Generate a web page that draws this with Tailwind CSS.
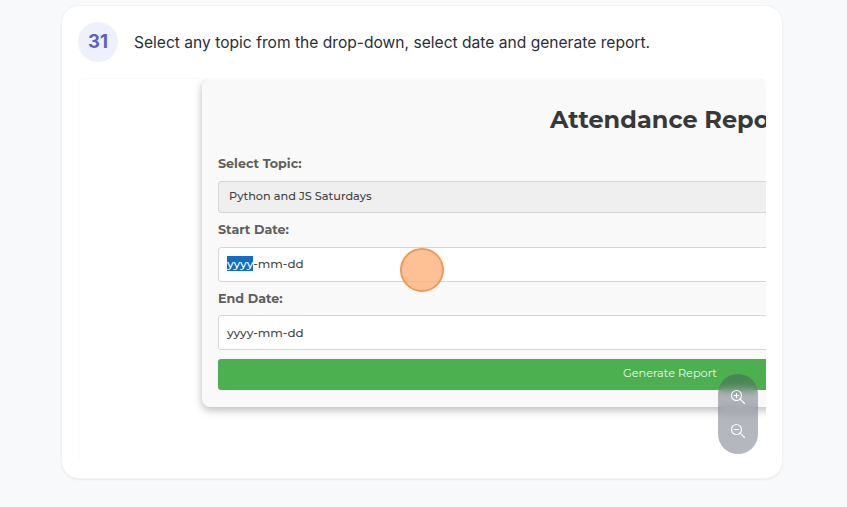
<!DOCTYPE html>
<html><head><meta charset="utf-8">
<script src="https://cdn.jsdelivr.net/npm/@tailwindcss/browser@4"></script>
</head>
<body class="m-0 bg-[#f8f9fb]">
<div class="w-[847px] h-[507px] overflow-hidden pt-[5px] pl-[61px] font-['Inter',sans-serif]">
  <div class="w-[722px] h-[474px] bg-white rounded-[18px] border border-[#f1f2f4] shadow-[0_1px_2px_rgba(0,0,0,0.06)] pt-4 px-4">
    <div class="flex items-center gap-4 h-10">
      <div class="w-10 h-10 shrink-0 rounded-full bg-[#eef0fc] text-[#5b5fc7] flex items-center justify-center text-[18.5px] font-bold">31</div>
      <p class="pt-[2px] text-[15.6px] text-[#2b2f38] whitespace-nowrap">Select any topic from the drop-down, select date and generate report.</p>
    </div>
    <div class="relative mt-4 w-[688px] h-[384px] overflow-hidden rounded-md border-l border-t border-[#fafafa] bg-white pl-[123px]">
      <div class="w-[640px] h-[328px] bg-[#f9f9f9] rounded-lg shadow-[0_3px_8px_rgba(0,0,0,0.28)] pt-6 pl-4 font-['Montserrat','Noto_Sans',sans-serif] text-[#5f5f5f]">
        <h1 class="h-[34px] leading-[34px] pl-[332px] text-[24px] font-bold text-[#383838] whitespace-nowrap">Attendance Report</h1>
        <div class="mt-[18px] h-[18px] leading-[18px] text-[12.7px] font-bold">Select Topic:</div>
        <div class="mt-[8px] w-[620px] h-[32px] bg-[#efefef] border border-[#d6d6d6] rounded-[3px] pl-[10px] leading-[29px] text-[11.3px] font-medium text-[#444]">Python and JS Saturdays</div>
        <div class="mt-[8px] h-[18px] leading-[18px] text-[12.7px] font-bold">Start Date:</div>
        <div class="mt-[8px] w-[620px] h-[35px] bg-white border border-[#d6d6d6] rounded-[3px] pl-[8px] leading-[31px] text-[11.9px] font-medium text-[#4a4a4a]"><span class="bg-[#0f6fc6] text-white">yyyy</span>-mm-dd</div>
        <div class="mt-[8px] h-[18px] leading-[18px] text-[12.7px] font-bold">End Date:</div>
        <div class="mt-[7px] w-[620px] h-[35px] bg-white border border-[#d6d6d6] rounded-[3px] pl-[8px] leading-[33px] text-[11.9px] font-medium text-[#4a4a4a]">yyyy-mm-dd</div>
        <div class="mt-[9px] w-[620px] h-[31px] bg-[#4caf50] rounded-[3px] pl-[405px] leading-[29px] text-[11.3px] text-[#eefbee] whitespace-nowrap">Generate Report</div>
      </div>
      <div class="absolute left-[321px] top-[169px] w-[44px] h-[44px] rounded-full bg-[#fdb27a]/80 border-2 border-[#ef9a55]"></div>
      <div class="absolute left-[639px] top-[295px] w-10 h-20 rounded-[20px] bg-[#464b5f]/40 backdrop-blur-[4px] flex flex-col items-center justify-center gap-[18px]">
        <svg class="w-4 h-4" viewBox="0 0 16 16" fill="none" stroke="#fff" stroke-width="1.1" stroke-linecap="round"><circle cx="6.5" cy="6.5" r="5"/><path d="M10.2 10.2 14.5 14.5M4.3 6.5h4.4M6.5 4.3v4.4"/></svg>
        <svg class="w-4 h-4" viewBox="0 0 16 16" fill="none" stroke="#fff" stroke-width="1.1" stroke-linecap="round"><circle cx="6.5" cy="6.5" r="5"/><path d="M10.2 10.2 14.5 14.5M4.3 6.5h4.4"/></svg>
      </div>
    </div>
  </div>
</div>
</body></html>
